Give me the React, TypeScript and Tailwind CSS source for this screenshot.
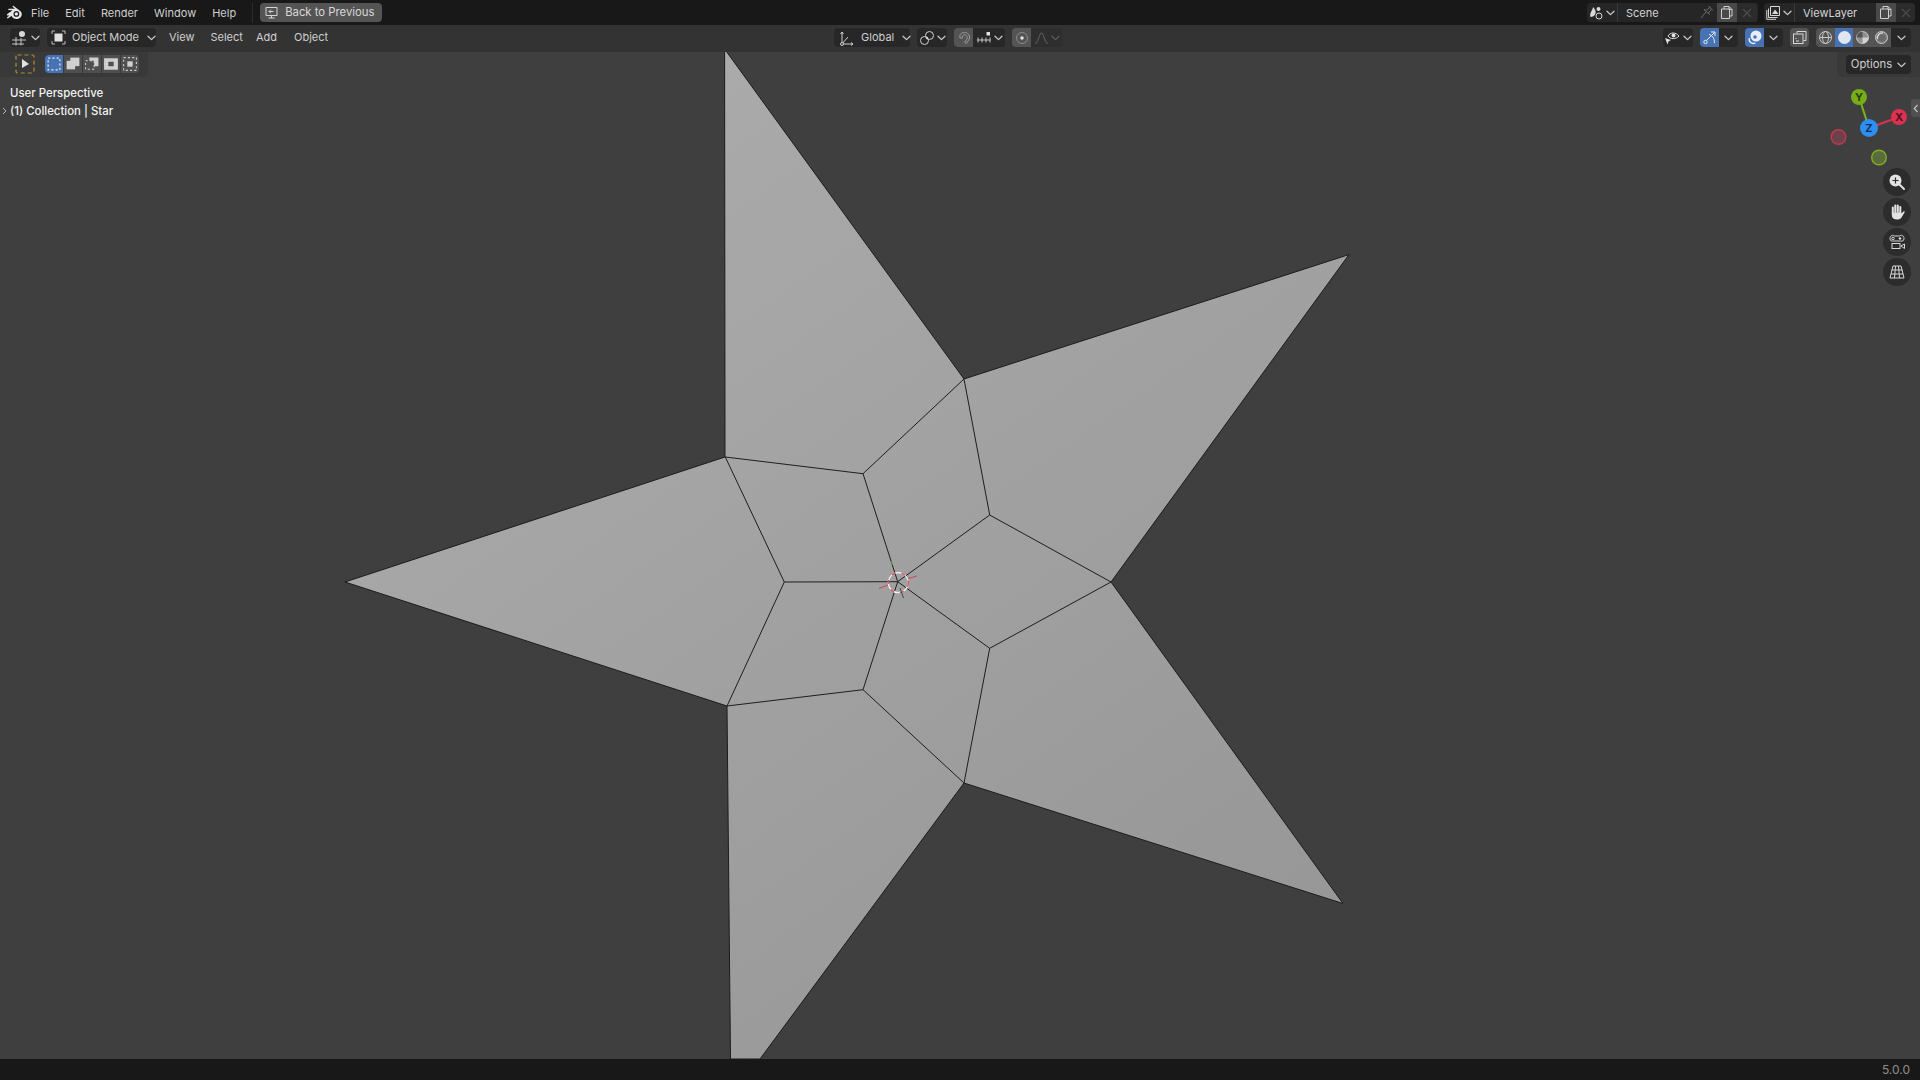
import React from "react";

const C = ({ className = "", w = 16, h = 16, vb, children }: any) => (
  <svg width={w} height={h} viewBox={vb || `0 0 ${w} ${h}`} fill="none" className={"shrink-0 " + className}>
    {children}
  </svg>
);
const Chev = ({ c = "#c8c8c8" }: { c?: string }) => (
  <svg width="9" height="6" viewBox="0 0 9 6" fill="none" className="shrink-0">
    <path d="M1 1.2 L4.5 4.6 L8 1.2" stroke={c} strokeWidth="1.3" strokeLinecap="round" strokeLinejoin="round" />
  </svg>
);

const Logo = () => (
  <svg width="18" height="15" viewBox="0 0 18 15" fill="none" className="shrink-0">
    <path d="M1 9.2 L6.6 5.2 L2.6 5.1 C2 5 2 3.9 2.8 3.8 L9 3.7 L6.8 1.9 C6.2 1.3 7 .5 7.7 1 L14.2 6 C16.4 7.8 16.3 11 14.1 12.8 C11.8 14.6 8 14.4 6.4 12.3 C6 11.7 5.8 11.3 5.7 10.8 L2.2 13.3 C1.4 13.8 .6 13 1.2 12.3 L3.6 10.4 L1.6 10.4 C.9 10.3 .6 9.7 1 9.2 Z" fill="#e6e6e6" />
    <circle cx="10.4" cy="8.9" r="2.9" fill="#181818" />
    <circle cx="10.4" cy="8.9" r="1.7" fill="#e6e6e6" />
  </svg>
);

const Menu = ({ children, className = "" }: any) => (
  <span className={"text-[11px] leading-none whitespace-nowrap text-[#cfcfcf] " + className}>{children}</span>
);

const SelMode = ({ active, children }: any) => (
  <div className={"w-[18px] h-[18px] flex items-center justify-center " + (active ? "bg-[#4772b3]" : "bg-[#4f4f4f]")}>
    <svg width="16" height="16" viewBox="0 0 15 15" fill="none">{children}</svg>
  </div>
);

const dash = { stroke: "#e6e6e6", strokeWidth: 1.2, strokeDasharray: "2 2" };

const Star = () => {
  const outer = "724.6,49 964,379 1349,254.6 1111,582 1343,903.5 964,783 760,1059 730.5,1059 727,706 345,582 725,457";
  const edges = [
    [725.3, 457, 863, 473.7], [863, 473.7, 964, 379], [964, 379, 989.7, 515], [989.7, 515, 1111, 582], [1111, 582, 989.7, 648.3],
    [989.7, 648.3, 964, 783], [964, 783, 863, 689.7], [863, 689.7, 727, 706], [727, 706, 784.3, 582], [784.3, 582, 725.3, 457],
    [897.7, 581.7, 863, 473.7], [897.7, 581.7, 989.7, 515], [897.7, 581.7, 989.7, 648.3], [897.7, 581.7, 863, 689.7], [897.7, 581.7, 784.3, 582],
  ];
  return (
    <svg width="1920" height="1007" viewBox="0 52 1920 1007" className="absolute left-0 top-0">
      <defs>
        <linearGradient id="sg" gradientUnits="userSpaceOnUse" x1="520" y1="80" x2="1180" y2="1020">
          <stop offset="0" stopColor="#acacac" />
          <stop offset="1" stopColor="#979797" />
        </linearGradient>
      </defs>
      <polygon points={outer} fill="url(#sg)" stroke="#1c1c1c" strokeWidth="1" />
      {edges.map((e, i) => (
        <line key={i} x1={e[0]} y1={e[1]} x2={e[2]} y2={e[3]} stroke="#1e1e1e" strokeWidth="1" />
      ))}
      <circle cx="898.3" cy="582.7" r="10" fill="none" stroke="#f4f4f4" strokeWidth="1.2" />
      <circle cx="898.3" cy="582.7" r="10" fill="none" stroke="#d8404f" strokeWidth="1.2" strokeDasharray="4 6" />
      <path d="M879 588.5 L888 585 M908 578.5 L917 576" stroke="#c44a55" strokeWidth="1" />
      <path d="M900 588 L903.5 598" stroke="#35503a" strokeWidth="1" />
      <path d="M891.5 561.5 L892.5 565" stroke="#70b030" strokeWidth="1" />
    </svg>
  );
};

const Gizmo = () => (
  <svg width="90" height="90" viewBox="1825 85 90 90" className="absolute left-[1825px] top-[33px]">
    <line x1="1869" y1="128" x2="1859" y2="97" stroke="#7cb518" strokeWidth="2" />
    <line x1="1869" y1="128" x2="1899" y2="117" stroke="#d8344f" strokeWidth="2" />
    <circle cx="1838.5" cy="137" r="7.3" fill="#6c4149" stroke="#c2394f" strokeWidth="1.4" />
    <circle cx="1879" cy="157.5" r="7.3" fill="#5a6c3c" stroke="#80ae22" strokeWidth="1.4" />
    <circle cx="1859" cy="97" r="8" fill="#76ad18" />
    <circle cx="1899" cy="117" r="8" fill="#dc3250" />
    <circle cx="1869" cy="128" r="9" fill="#2d8ff0" />
    <text x="1859" y="101" textAnchor="middle" fontSize="11" fontWeight="700" fontFamily="Inter, sans-serif" fill="#2c3a10">Y</text>
    <text x="1899" y="121" textAnchor="middle" fontSize="11" fontWeight="700" fontFamily="Inter, sans-serif" fill="#4a1420">X</text>
    <text x="1869" y="132" textAnchor="middle" fontSize="11" fontWeight="700" fontFamily="Inter, sans-serif" fill="#10305a">Z</text>
  </svg>
);

const NavBtn = ({ children }: any) => (
  <div className="w-[28px] h-[28px] rounded-full bg-[#2c2c2c] flex items-center justify-center">{children}</div>
);

const Duplicate = () => (
  <C w={14} h={15}>
    <path d="M4 4 V1.5 H9 L12 4.5 V11 H9.5 M1.5 4 H9.5 V13.5 H1.5 Z M9 1.5 V4.5 H12" stroke="#d0d0d0" strokeWidth="1" />
  </C>
);
const Cross = () => (
  <C w={10} h={10}>
    <path d="M1 1 L9 9 M9 1 L1 9" stroke="#4c4c4c" strokeWidth="1.2" />
  </C>
);

export default function App() {
  return (
    <div className="w-[1920px] h-[1080px] flex flex-col overflow-hidden bg-[#3f3f3f]" style={{ fontFamily: "Inter, 'Liberation Sans', sans-serif" }}>
      {/* Top bar */}
      <div className="h-[25px] shrink-0 bg-[#181818] flex items-center pl-[6px] pr-[5px]">
        <Logo />
        <Menu className="ml-[7px] mt-[1px]">File</Menu>
        <Menu className="ml-[16px] mt-[1px]">Edit</Menu>
        <Menu className="ml-[16px] mt-[1px]">Render</Menu>
        <Menu className="ml-[16px] mt-[1px]">Window</Menu>
        <Menu className="ml-[16px] mt-[1px]">Help</Menu>
        <div className="ml-[16px] w-px h-[20px] bg-[#2c2c2c]" />
        <div className="ml-[7px] w-[122px] h-[19px] rounded-[4px] bg-[#545454] flex items-center pl-[4px] gap-[6px]">
          <C w={15} h={15}>
            <path d="M2 2.5 H13 V10.5 H2 Z M7.5 10.5 V13 M4.5 13 H10.5" stroke="#d5d5d5" strokeWidth="1" />
            <path d="M9.5 6.5 H5 M6.8 4.7 L5 6.5 L6.8 8.3" stroke="#d5d5d5" strokeWidth="1" />
          </C>
          <span className="mt-[1px] text-[11.3px] leading-none whitespace-nowrap text-[#d8d8d8]">Back to Previous</span>
        </div>
        <div className="flex-1" />
        {/* Scene */}
        <div className="w-[171px] h-[19px] rounded-[4px] bg-[#262626] flex items-center overflow-hidden">
          <div className="w-[31px] h-full flex items-center justify-center gap-[2px] border-r border-[#3a3a3a]">
            <C w={15} h={15}>
              <path d="M1.5 12 C0 8 3.5 6 4 2 C6.5 5 7.5 7 6 9.5 C5 11 4 12 1.5 12 Z" fill="#d8d8d8" />
              <circle cx="9.5" cy="4" r="2" fill="#d8d8d8" />
              <circle cx="10" cy="11" r="3" stroke="#d8d8d8" strokeWidth="1" />
            </C>
            <Chev />
          </div>
          <span className="ml-[8px] mt-[1px] text-[11px] leading-none text-[#d5d5d5] w-[72px]">Scene</span>
          <C w={17} h={17}>
            <path d="M10.5 2 L15 6.5 M12.5 3 L8 6.5 L6 5.5 L11.5 10.5 L10.5 9 L13.5 5 M8 8 L3 14" stroke="#6a6a6a" strokeWidth="1" />
          </C>
          <div className="ml-[2px] w-[20px] h-full bg-[#494949] flex items-center justify-center">
            <Duplicate />
          </div>
          <div className="w-[20px] h-full bg-[#2b2b2b] flex items-center justify-center">
            <Cross />
          </div>
        </div>
        {/* ViewLayer */}
        <div className="ml-[6px] w-[151px] h-[19px] rounded-[4px] bg-[#262626] flex items-center overflow-hidden">
          <div className="w-[31px] h-full flex items-center justify-center gap-[2px] border-r border-[#3a3a3a]">
            <C w={15} h={15}>
              <path d="M4.5 1.5 H13.5 V10.5 H4.5 Z" stroke="#d8d8d8" strokeWidth="1" />
              <path d="M2.5 3.5 V12.5 H11.5 M.8 5 V14.3 H10" stroke="#d8d8d8" strokeWidth="1" />
              <path d="M6 9 L9 4.5 L12.5 9 Z" fill="#d8d8d8" />
            </C>
            <Chev />
          </div>
          <span className="ml-[8px] mt-[1px] text-[11px] leading-none text-[#d5d5d5] w-[73px]">ViewLayer</span>
          <div className="w-[20px] h-full bg-[#494949] flex items-center justify-center">
            <Duplicate />
          </div>
          <div className="w-[19px] h-full bg-[#2b2b2b] flex items-center justify-center">
            <Cross />
          </div>
        </div>
      </div>

      {/* Header */}
      <div className="h-[27px] shrink-0 bg-[#333333] flex items-center pl-[10px] pr-[9px] pb-[2px]">
        <div className="w-[30px] h-[19px] rounded-[4px] bg-[#272727] flex items-center justify-center gap-[2px]">
          <C w={18} h={16}>
            <circle cx="11" cy="4" r="3" fill="#d8d8d8" />
            <path d="M1 10 H15 M1 14 H13 M5 7 V15.5 M10 8 V15.5" stroke="#c4c4c4" strokeWidth="1" />
          </C>
          <Chev />
        </div>
        <div className="ml-[7px] w-[109px] h-[19px] rounded-[4px] bg-[#272727] flex items-center pl-[4px]">
          <C w={15} h={15}>
            <rect x="3.5" y="3.5" width="8" height="8" fill="#e0e0e0" />
            <path d="M1 4 V1 H4 M11 1 H14 V4 M14 11 V14 H11 M4 14 H1 V11" stroke="#bcbcbc" strokeWidth="1" />
          </C>
          <span className="ml-[6px] text-[11px] leading-none whitespace-nowrap text-[#cfcfcf]">Object Mode</span>
          <span className="ml-[8px]"><Chev /></span>
        </div>
        <Menu className="ml-[13px]">View</Menu>
        <Menu className="ml-[16px]">Select</Menu>
        <Menu className="ml-[13px]">Add</Menu>
        <Menu className="ml-[17px]">Object</Menu>
        <div className="ml-[506px] w-[76px] h-[19px] rounded-[4px] bg-[#272727] flex items-center pl-[4px]">
          <C w={16} h={16}>
            <path d="M4 14 V2.5 M2.5 4 L4 2 L5.5 4 M4 14 H14.5 M13 12.5 L15 14 L13 15.5 M4 14 L10 7" stroke="#d0d0d0" strokeWidth="1" />
            <circle cx="4" cy="14" r="1.5" fill="#303030" stroke="#d0d0d0" />
          </C>
          <span className="ml-[7px] text-[11px] leading-none text-[#cfcfcf]">Global</span>
          <span className="ml-[8px]"><Chev /></span>
        </div>
        <div className="ml-[7px] w-[30px] h-[19px] rounded-[4px] bg-[#272727] flex items-center justify-center gap-[2px]">
          <C w={16} h={16}>
            <circle cx="5.5" cy="10.5" r="4" stroke="#d0d0d0" strokeWidth="1" />
            <circle cx="10.5" cy="5.5" r="4" stroke="#d0d0d0" strokeWidth="1" />
            <circle cx="8" cy="8" r="1.2" fill="#d0d0d0" />
          </C>
          <Chev />
        </div>
        <div className="ml-[7px] w-[51px] h-[19px] rounded-[4px] bg-[#272727] flex items-center overflow-hidden">
          <div className="w-[19px] h-full bg-[#545454] flex items-center justify-center">
            <C w={14} h={14}>
              <path d="M3 7 C2 3 5 1.5 7.5 1.5 C10.5 1.5 13 4 12.5 7 C12 9 10.5 10.8 9.3 12.5 L7.5 11.3 C8.8 9.5 10.3 8 10.3 6.5 C10.3 5 9 3.8 7.5 3.8 C6 3.8 5 5 5.5 7 Z" stroke="#9c9c9c" strokeWidth="1" />
            </C>
          </div>
          <div className="flex-1 flex items-center justify-center gap-[2px]">
            <C w={16} h={14}>
              <rect x="10.5" y="1" width="3.5" height="3.5" fill="#e4e4e4" />
              <path d="M1 9 H14.5 M2 6.5 V11.5 M6 6.5 V11.5 M10 6.5 V11.5 M14 6.5 V11.5" stroke="#c4c4c4" strokeWidth="1" />
            </C>
            <Chev />
          </div>
        </div>
        <div className="ml-[7px] w-[50px] h-[19px] rounded-[4px] bg-[#2e2e2e] flex items-center overflow-hidden">
          <div className="w-[19px] h-full bg-[#545454] flex items-center justify-center">
            <C w={14} h={14}>
              <circle cx="7" cy="7" r="5.5" stroke="#8a8a8a" strokeWidth="1" />
              <circle cx="7" cy="7" r="1.7" fill="#e8e8e8" />
            </C>
          </div>
          <div className="flex-1 flex items-center justify-center gap-[2px]">
            <C w={15} h={14}><path d="M1 12.5 C4.5 12.5 5 2 7.5 2 C10 2 10.5 12.5 14 12.5" stroke="#5c5c5c" strokeWidth="1.1" /></C>
            <Chev c="#5c5c5c" />
          </div>
        </div>
        <div className="flex-1" />
        {/* right header */}
        <div className="w-[30px] h-[19px] rounded-[4px] bg-[#272727] flex items-center justify-center gap-[2px]">
          <C w={17} h={15}>
            <path d="M4 6 C6 2 12 2 15 6 C12 9.5 6 9.5 4 6 Z" stroke="#e0e0e0" strokeWidth="1" />
            <circle cx="9.5" cy="5.5" r="2" fill="#e0e0e0" />
            <path d="M1 8 L7 10 L4.5 11.5 L3.5 14.5 Z" fill="#e0e0e0" />
          </C>
          <Chev />
        </div>
        <div className="ml-[7px] w-[38px] h-[19px] rounded-[4px] bg-[#272727] flex items-center overflow-hidden">
          <div className="w-[19px] h-full bg-[#4772b3] flex items-center justify-center">
            <C w={15} h={15}>
              <circle cx="3.5" cy="12" r="1.7" stroke="#e8eef8" />
              <path d="M4.5 10.5 L12.5 2.5 M9 2 H13 V6 M7 4.5 C10 5 12.5 8 12.5 13" stroke="#e8eef8" strokeWidth="1" />
            </C>
          </div>
          <div className="flex-1 flex items-center justify-center"><Chev /></div>
        </div>
        <div className="ml-[7px] w-[38px] h-[19px] rounded-[4px] bg-[#272727] flex items-center overflow-hidden">
          <div className="w-[19px] h-full bg-[#4772b3] flex items-center justify-center">
            <C w={15} h={15}>
              <circle cx="9" cy="6" r="5.5" fill="#e8eef8" />
              <circle cx="8" cy="7" r="1.8" fill="#4772b3" />
              <path d="M2.5 8 C1 12 5 14.5 8.5 13" stroke="#e8eef8" strokeWidth="1.3" />
            </C>
          </div>
          <div className="flex-1 flex items-center justify-center"><Chev /></div>
        </div>
        <div className="ml-[7px] w-[19px] h-[19px] rounded-[4px] bg-[#545454] flex items-center justify-center">
          <C w={15} h={15}>
            <path d="M5 3.5 V1.5 H14 V10.5 H11.5" stroke="#d6d6d6" strokeWidth="1" />
            <rect x="1.5" y="4" width="9.5" height="9.5" stroke="#d6d6d6" strokeWidth="1" />
            <path d="M4 8 V9 M4 11 H7" stroke="#d6d6d6" strokeWidth="1" />
          </C>
        </div>
        <div className="ml-[7px] w-[95px] h-[19px] rounded-[4px] bg-[#272727] flex items-center overflow-hidden">
          <div className="w-[19px] h-full bg-[#545454] flex items-center justify-center">
            <C w={15} h={15}>
              <circle cx="7.5" cy="7.5" r="6" stroke="#c8c8c8" strokeWidth="1" />
              <ellipse cx="7.5" cy="7.5" rx="3" ry="6" stroke="#c8c8c8" strokeWidth="1" />
              <path d="M1.5 7.5 H13.5" stroke="#c8c8c8" strokeWidth="1" />
            </C>
          </div>
          <div className="w-[18px] h-full bg-[#4772b3] flex items-center justify-center">
            <C w={15} h={15}><circle cx="7.5" cy="7.5" r="6.5" fill="#dfe6f2" /></C>
          </div>
          <div className="w-[19px] h-full bg-[#545454] flex items-center justify-center">
            <C w={15} h={15}>
              <circle cx="7.5" cy="7.5" r="6" fill="#8f8f8f" stroke="#c8c8c8" />
              <path d="M7.5 1.5 A6 6 0 0 0 1.5 7.5 H7.5 Z" fill="#545454" />
              <path d="M7.5 7.5 H13.5 A6 6 0 0 1 7.5 13.5 Z" fill="#d2d2d2" />
            </C>
          </div>
          <div className="w-[19px] h-full bg-[#545454] flex items-center justify-center">
            <C w={15} h={15}>
              <circle cx="7.5" cy="7.5" r="6" fill="#7a7a7a" stroke="#c8c8c8" />
              <path d="M3.5 9 A5 5 0 0 1 9 3" stroke="#e0e0e0" strokeWidth="1.3" />
              <circle cx="8" cy="8" r="3.5" fill="#6a6a6a" />
            </C>
          </div>
          <div className="flex-1 flex items-center justify-center"><Chev /></div>
        </div>
      </div>

      {/* Viewport */}
      <div className="flex-1 relative overflow-hidden bg-[#3f3f3f]">
        <Star />
        {/* tool header */}
        <div className="relative flex items-start justify-between h-[24px]">
          <div className="h-[25px] w-[148px] bg-[#393939] rounded-br-[5px] flex items-center pl-[15px] pb-[2px]">
            <div className="w-[20px] h-[20px] flex items-center justify-center relative">
              <svg width="20" height="20" viewBox="0 0 20 20" fill="none" className="absolute inset-0">
                <rect x="1" y="1" width="18" height="18" rx="1.5" stroke="#b98a35" strokeWidth="1.2" strokeDasharray="4 3" />
              </svg>
              <svg width="10" height="11" viewBox="0 0 10 11" className="relative"><path d="M2 1 L9 6 L2 10 Z" fill="#e2e2e2" /></svg>
            </div>
            <div className="ml-[10px] flex rounded-[4px] overflow-hidden gap-px">
              <SelMode active>
                <rect x="2" y="2" width="11" height="11" {...dash} />
              </SelMode>
              <SelMode>
                <rect x="1.5" y="4.5" width="8" height="8" fill="#d0d0d0" />
                <rect x="5" y="1.5" width="8.5" height="8" fill="#d0d0d0" />
              </SelMode>
              <SelMode>
                <rect x="1.5" y="4.5" width="8" height="8" stroke="#d0d0d0" strokeDasharray="2 2" />
                <path d="M5 1.5 H13.5 V9.5 H9.5 V4.5 H5 Z" fill="#d0d0d0" />
              </SelMode>
              <SelMode>
                <path d="M1 2 H14 V13 H1 Z M5 5.5 V9.5 H10 V5.5 Z" fill="#d0d0d0" fillRule="evenodd" />
              </SelMode>
              <SelMode>
                <rect x="1.5" y="1.5" width="12" height="12" stroke="#d0d0d0" strokeDasharray="2 2" />
                <rect x="5" y="5" width="5" height="5" fill="#d0d0d0" />
              </SelMode>
            </div>
          </div>
          <div className="h-[25px] w-[83px] bg-[#393939] rounded-bl-[5px] flex items-center justify-end pr-[9px]">
            <div className="w-[65px] h-[19px] rounded-[4px] bg-[#272727] flex items-center justify-center gap-[5px]">
              <span className="text-[11.3px] leading-none text-[#cfcfcf]">Options</span>
              <Chev />
            </div>
          </div>
        </div>
        {/* overlay text */}
        <div className="absolute left-[10px] top-[35px] flex flex-col gap-[5px] text-[11.4px] leading-[13px] font-medium text-[#f2f2f2]">
          <span>User Perspective</span>
          <span>(1) Collection | Star</span>
        </div>
        <svg width="6" height="8" viewBox="0 0 6 8" className="absolute left-[2px] top-[55px]" fill="none">
          <path d="M1 1 L4 4 L1 7" stroke="#b5b5b5" strokeWidth="1" />
        </svg>
        <Gizmo />
        <div className="absolute left-[1911px] top-[47px] w-[9px] h-[18px] rounded-l-[3px] bg-[#505050] flex items-center justify-center">
          <svg width="6" height="9" viewBox="0 0 6 9" fill="none"><path d="M4.5 1 L1.2 4.5 L4.5 8" stroke="#c8c8c8" strokeWidth="1.1" /></svg>
        </div>
        <div className="absolute left-[1883px] top-[116px] flex flex-col gap-[2px]">
          <NavBtn>
            <C w={18} h={18}>
              <circle cx="7.5" cy="7.5" r="6" fill="#e2e2e2" />
              <path d="M4.5 7.5 H10.5 M7.5 4.5 V10.5" stroke="#2c2c2c" strokeWidth="1.2" />
              <path d="M11.5 11.5 L16 16" stroke="#e2e2e2" strokeWidth="2" strokeLinecap="round" />
            </C>
          </NavBtn>
          <NavBtn>
            <C w={18} h={18}>
              <path d="M4.8 10 V4.5 M7.3 9 V2.5 M9.8 9 V2.5 M12.3 9.5 V4" stroke="#e2e2e2" strokeWidth="2" strokeLinecap="round" />
              <path d="M3.8 9.5 H13.3 V10.5 L15.5 8.5 C16.2 8 17 8.6 16.5 9.5 L13.5 14.5 C12.5 16 11 16.5 9 16.5 C6 16.5 3.8 15 3.8 12 Z" fill="#e2e2e2" />
            </C>
          </NavBtn>
          <NavBtn>
            <C w={18} h={18}>
              <path d="M2 5.5 C2 2.5 5 1.5 6.5 3 H11.5 C13 1.5 16 2.5 16 5.5 C16 8 14 8.5 12.5 8 H5.5 C4 8.5 2 8 2 5.5 Z" stroke="#d8d8d8" strokeWidth="1" />
              <circle cx="5" cy="5.5" r="1.3" stroke="#d8d8d8" />
              <circle cx="12" cy="5.5" r="1.3" fill="#d8d8d8" />
              <rect x="4" y="10.5" width="8" height="5" stroke="#d8d8d8" strokeWidth="1" />
              <path d="M13 13 L16.5 11 V15.5 Z" stroke="#d8d8d8" strokeWidth="1" />
            </C>
          </NavBtn>
          <NavBtn>
            <C w={18} h={18}>
              <path d="M5 3 H13 L16 15 H2 Z M3.5 7 H14.5 M2.8 11 H15.2 M7.5 3 L6.5 15 M10.5 3 L11.5 15" stroke="#d8d8d8" strokeWidth="1" />
            </C>
          </NavBtn>
        </div>
      </div>

      {/* Status bar */}
      <div className="h-[21px] shrink-0 bg-[#181818] flex items-center justify-end pr-[10px]">
        <span className="text-[12px] leading-none text-[#8f8f8f]">5.0.0</span>
      </div>
    </div>
  );
}
